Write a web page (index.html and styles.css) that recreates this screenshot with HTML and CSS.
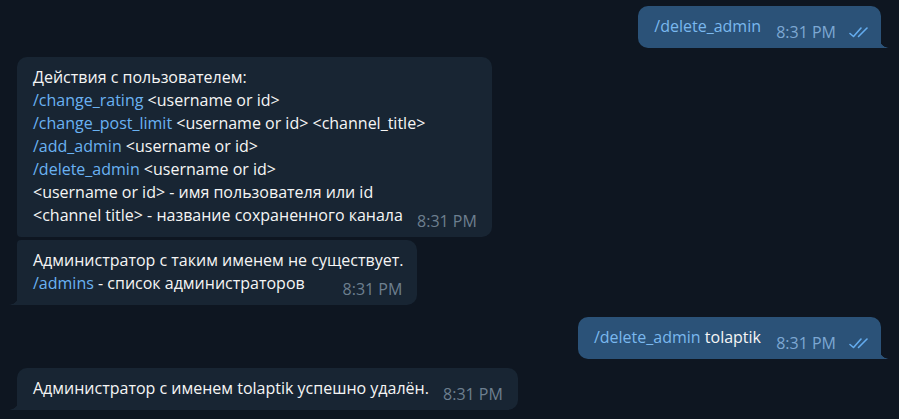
FILE: index.html
```html
<!DOCTYPE html>
<html lang="ru">
<head>
<meta charset="utf-8">
<link rel="stylesheet" href="styles.css">
</head>
<body>
<div class="chat">
  <div class="msg out">
    <div class="bubble tail"><span class="cmd">/delete_admin</span><span class="spacer"></span><span class="meta"><span class="time">8:31 PM</span><svg class="ticks" viewBox="0 0 20 12" width="20" height="12"><path d="M1 7.5 L4.5 10.5 L12 2" fill="none" stroke="#64acee" stroke-width="1.6" stroke-linecap="round" stroke-linejoin="round"/><path d="M9.5 10.5 L18 2" fill="none" stroke="#64acee" stroke-width="1.6" stroke-linecap="round"/></svg></span></div>
  </div>

  <div class="msg in group">
    <div class="bubble grouped">Действия с пользователем:<br><span class="cmd">/change_rating</span> &lt;username or id&gt;<br><span class="cmd">/change_post_limit</span> &lt;username or id&gt; &lt;channel_title&gt;<br><span class="cmd">/add_admin</span> &lt;username or id&gt;<br><span class="cmd">/delete_admin</span> &lt;username or id&gt;<br>&lt;username or id&gt; - имя пользователя или id<br>&lt;channel title&gt; - название сохраненного канала<span class="spacer"></span><span class="meta"><span class="time">8:31 PM</span></span></div>
  </div>

  <div class="msg in cont">
    <div class="bubble tail grouped-top">Администратор с таким именем не существует.<br><span class="cmd">/admins</span> - список администраторов<span class="spacer"></span><span class="meta"><span class="time">8:31 PM</span></span></div>
  </div>

  <div class="msg out">
    <div class="bubble tail"><span class="cmd">/delete_admin</span> tolaptik<span class="spacer"></span><span class="meta"><span class="time">8:31 PM</span><svg class="ticks" viewBox="0 0 20 12" width="20" height="12"><path d="M1 7.5 L4.5 10.5 L12 2" fill="none" stroke="#64acee" stroke-width="1.6" stroke-linecap="round" stroke-linejoin="round"/><path d="M9.5 10.5 L18 2" fill="none" stroke="#64acee" stroke-width="1.6" stroke-linecap="round"/></svg></span></div>
  </div>

  <div class="msg in">
    <div class="bubble tail">Администратор с именем tolaptik успешно удалён.<span class="spacer"></span><span class="meta"><span class="time">8:31 PM</span></span></div>
  </div>

  <div class="msg out">
    <div class="bubble stub"></div>
  </div>
</div>
</body>
</html>
```

FILE: styles.css
```css
html, body {
  margin: 0;
  padding: 0;
  background: #0e1621;
  height: 100%;
  overflow: hidden;
}
body {
  font-family: "Open Sans", "Noto Sans", sans-serif;
  font-size: 16px;
  color: #f5f5f5;
}
.chat {
  display: flex;
  flex-direction: column;
  padding-top: 6px;
}
.msg {
  display: flex;
  margin-bottom: 9px;
}
.msg.out {
  justify-content: flex-end;
  padding-right: 18px;
}
.msg.in {
  justify-content: flex-start;
  padding-left: 17px;
}
.msg.in.group { margin-bottom: 3px; }
.msg.in.cont { margin-bottom: 12px; }

.bubble {
  position: relative;
  line-height: 23px;
  padding: 9px 14px 10px 16px;
  border-radius: 10px;
  white-space: nowrap;
}
.msg.in .bubble {
  background: #182533;
}
.msg.out .bubble {
  background: #2b5278;
}
.msg.in .cmd { color: #6ab2f2; }
.msg.out .cmd { color: #7ab8ee; }

.spacer {
  display: inline-block;
  width: 75px;
}
.msg.out .spacer {
  width: 106px;
}

.meta {
  position: absolute;
  right: 12px;
  bottom: 8px;
  display: flex;
  align-items: center;
  gap: 13px;
  line-height: 16px;
}
.time {
  font-size: 16px;
}
.msg.in .meta { right: 15px; }
.msg.in .time { color: #6d7f8f; }
.msg.out .time { color: #7da8d3; }
.ticks { display: block; }

.grouped { border-bottom-left-radius: 4px; }
.grouped-top { border-top-left-radius: 4px; }

.msg.out .bubble.tail { border-bottom-right-radius: 0; }
.msg.in .bubble.tail { border-bottom-left-radius: 0; }

.bubble.tail::after {
  content: "";
  position: absolute;
  bottom: 0;
  width: 8px;
  height: 10px;
}
.msg.out .bubble.tail::after {
  right: -8px;
  background: radial-gradient(circle at 100% 0, transparent 9.5px, #2b5278 10px);
}
.msg.in .bubble.tail::after {
  left: -8px;
  background: radial-gradient(circle at 0 0, transparent 9.5px, #182533 10px);
}
.bubble.stub {
  width: 192px;
  height: 30px;
  padding: 0;
  margin-right: 2px;
}
```
